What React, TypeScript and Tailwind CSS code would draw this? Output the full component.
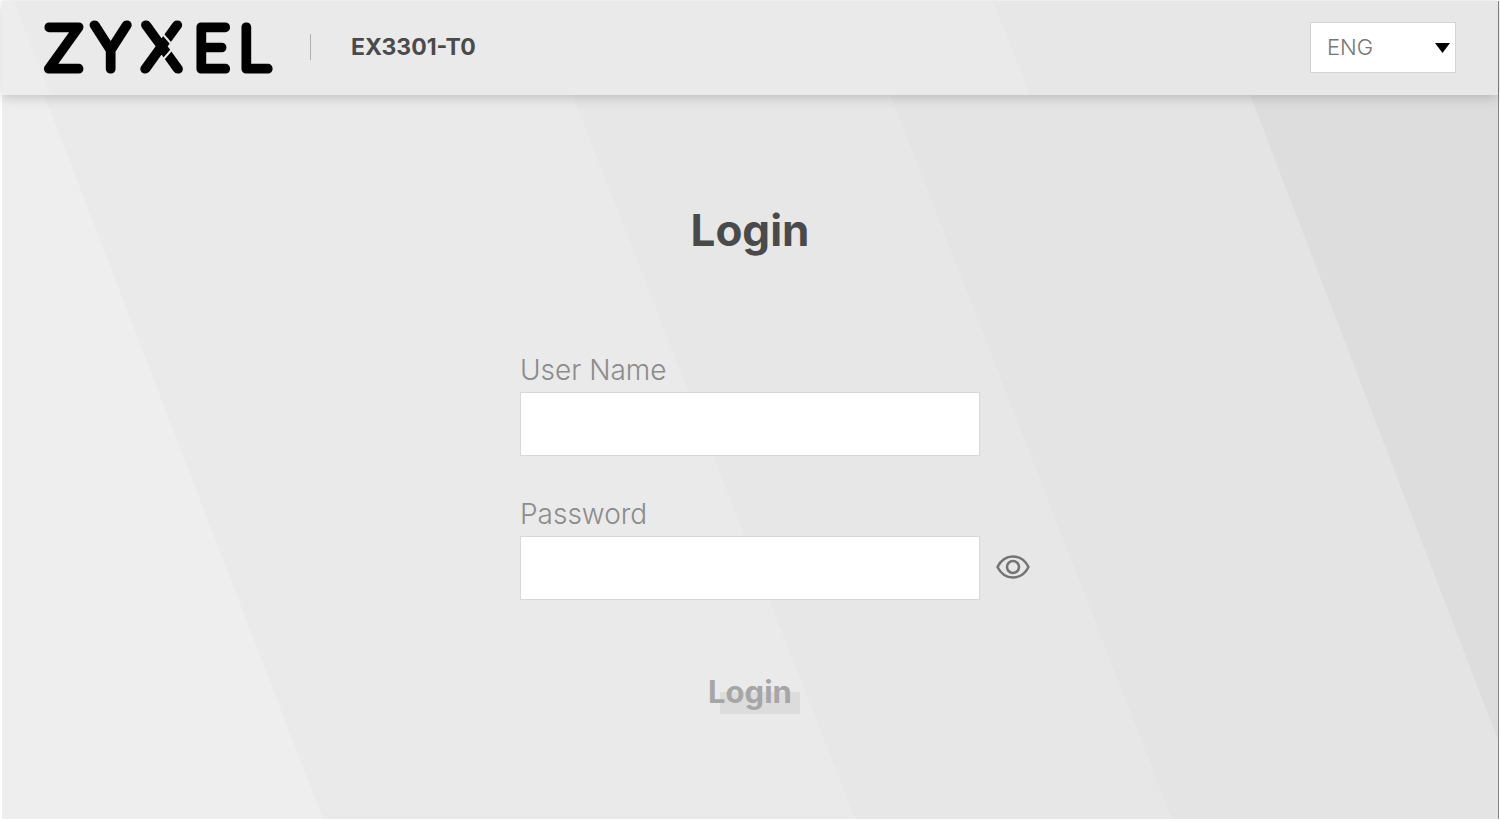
import React, { useState } from 'react';

const languages = ['ENG', 'DEU', 'FRA', 'ESP', 'ITA'];

const Backdrop: React.FC = () => (
    <svg className="absolute inset-0 h-full w-full" viewBox="0 0 1496 818" preserveAspectRatio="none" aria-hidden="true">
        <rect width="1496" height="818" fill="#eeeeee" />
        <path d="M6 0 L321 818 H1496 V0 Z" fill="#eaeaea" />
        <path d="M534 0 L853 818 H1496 V0 Z" fill="#e7e7e7" />
        <path d="M852 0 L1170 818 H1496 V0 Z" fill="#e4e4e4" />
        <path d="M1212 0 L1496 739 V0 Z" fill="#dddddd" />
    </svg>
);

const HeaderBackdrop: React.FC = () => (
    <svg className="absolute inset-0 h-full w-full" viewBox="0 0 1496 94" preserveAspectRatio="none" aria-hidden="true">
        <rect width="1496" height="94" fill="#ededed" />
        <path d="M12 0 L48 94 H1496 V0 Z" fill="#eaeaea" />
        <path d="M991 0 L1028 94 H1496 V0 Z" fill="#e7e7e7" />
    </svg>
);

const ZyxelLogo: React.FC = () => (
    <svg className="h-[80px] w-[236px]" viewBox="0 0 236 80" role="img" aria-label="ZYXEL">
        <text
            y="62"
            fontFamily="Lato, sans-serif"
            fontWeight="100"
            fontSize="60"
            fill="#000"
            stroke="#000"
            strokeWidth="9"
            strokeLinejoin="round"
        >
            <tspan x="4">Z</tspan>
            <tspan x="51" fontSize="62">Y</tspan>
            <tspan x="101" fontSize="62">X</tspan>
            <tspan x="152">E</tspan>
            <tspan x="197">L</tspan>
        </text>
        <path d="M119 25 L132 40 L119 55" fill="none" stroke="#eaeaea" strokeWidth="2" />
    </svg>
);

const EyeIcon: React.FC = () => (
    <svg className="h-6 w-[34px]" viewBox="0 0 34 24" fill="none" stroke="#747474" strokeWidth="2.500" aria-hidden="true">
        <path d="M1.5 12 C5 5 10.500 1.500 17 1.500 C23.500 1.500 29 5 32.500 12 C29 19 23.500 22.500 17 22.500 C10.500 22.500 5 19 1.500 12 Z" />
        <circle cx="17" cy="12" r="6" />
    </svg>
);

const Header: React.FC = () => (
    <header className="relative h-[94px] shadow-[0_2px_12px_rgba(0,0,0,0.2)]">
        <HeaderBackdrop />
        <div className="relative flex h-full items-center pb-[2px] pl-10 pr-[42px]">
            <ZyxelLogo />
            <span className="ml-8 h-[26px] w-px bg-[#b0b0b0]" />
            <span className="ml-10 text-[23px] font-bold text-[#4a4a4a]">EX3301-T0</span>
            <div className="relative ml-auto">
                <select
                    aria-label="Language"
                    className="block h-[51px] w-[146px] appearance-none border border-[#d4d4d4] bg-white pl-4 text-[22px] font-light text-[#777777]"
                >
                    {languages.map((lang) => (
                        <option key={lang}>{lang}</option>
                    ))}
                </select>
                <svg className="pointer-events-none absolute right-[6px] top-[21px] h-[10px] w-[15px]" viewBox="0 0 15 10" aria-hidden="true">
                    <path d="M0 0 H15 L7.500 10 Z" fill="#000" />
                </svg>
            </div>
        </div>
    </header>
);

export default function App() {
    const [userName, setUserName] = useState('');
    const [password, setPassword] = useState('');
    const [showPassword, setShowPassword] = useState(false);

    return (
        <div className="flex min-h-screen flex-col bg-white pb-[2px] pl-[2px] pr-px pt-px font-['Inter',sans-serif]">
            <div className="relative flex grow flex-col border-r border-[#858585]">
                <Backdrop />
                <Header />
                <main className="relative grow pt-[105px]">
                    <h1 className="text-center text-[44px] font-bold leading-[60px] text-[#4a4a4a]">Login</h1>
                    <form className="mt-[90px] grid grid-cols-[1fr_460px_1fr]" onSubmit={(e) => e.preventDefault()}>
                        <label htmlFor="userName" className="col-start-2 text-[28px] font-light leading-[40px] text-[#8c8c8c]">
                            User Name
                        </label>
                        <input
                            id="userName"
                            type="text"
                            value={userName}
                            onChange={(e) => setUserName(e.target.value)}
                            className="col-start-2 mt-[2px] h-16 border border-[#d8d8d8] bg-white px-4 text-2xl text-[#4a4a4a] outline-none"
                        />
                        <label htmlFor="password" className="col-start-2 mt-[38px] text-[28px] font-light leading-[40px] text-[#8c8c8c]">
                            Password
                        </label>
                        <input
                            id="password"
                            type={showPassword ? 'text' : 'password'}
                            value={password}
                            onChange={(e) => setPassword(e.target.value)}
                            className="col-start-2 mt-[2px] h-16 border border-[#d8d8dc] bg-white px-4 text-2xl text-[#4a4a4a] outline-none"
                        />
                        <button
                            type="button"
                            aria-label="Show password"
                            onClick={() => setShowPassword(!showPassword)}
                            className="ml-4 self-center justify-self-start"
                        >
                            <EyeIcon />
                        </button>
                        <button
                            type="submit"
                            className="relative col-start-2 mt-[70px] justify-self-center text-[31px] font-bold leading-[44px] text-[#a6a6a6]"
                        >
                            <span className="absolute -right-2 bottom-0 left-3 h-[22px] bg-[#dcdcdc]" />
                            <span className="relative">Login</span>
                        </button>
                    </form>
                </main>
            </div>
        </div>
    );
}
